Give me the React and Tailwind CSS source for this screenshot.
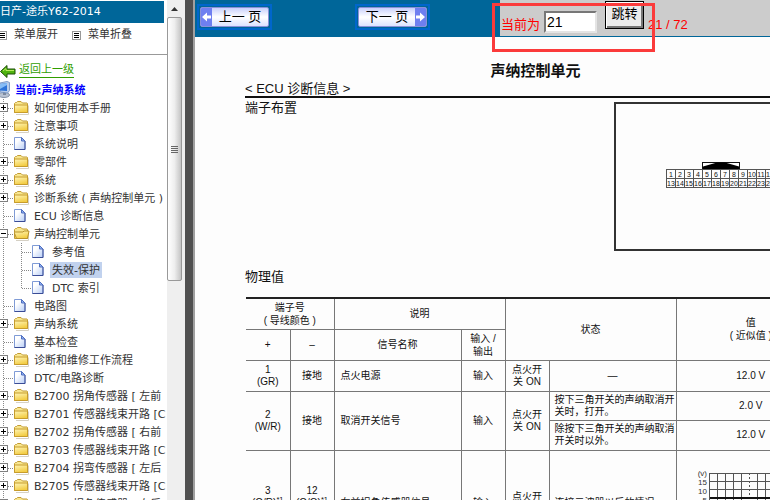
import { useState } from 'react';

// ============================================================
// DATA
// ============================================================

const TREE = [
  { type: 'folder', label: '如何使用本手册' },
  { type: 'folder', label: '注意事项' },
  { type: 'page', label: '系统说明' },
  { type: 'folder', label: '零部件' },
  { type: 'folder', label: '系统' },
  { type: 'folder', label: '诊断系统 ( 声纳控制单元 )' },
  { type: 'page', label: 'ECU 诊断信息' },
  {
    type: 'folder',
    label: '声纳控制单元',
    open: true,
    children: [
      { type: 'page', label: '参考值' },
      { type: 'page', label: '失效-保护', selected: true },
      { type: 'page', label: 'DTC 索引' },
    ],
  },
  { type: 'page', label: '电路图' },
  { type: 'folder', label: '声纳系统' },
  { type: 'page', label: '基本检查' },
  { type: 'folder', label: '诊断和维修工作流程' },
  { type: 'page', label: 'DTC/电路诊断' },
  { type: 'folder', label: 'B2700 拐角传感器 [ 左前' },
  { type: 'folder', label: 'B2701 传感器线束开路 [C' },
  { type: 'folder', label: 'B2702 拐角传感器 [ 右前' },
  { type: 'folder', label: 'B2703 传感器线束开路 [C' },
  { type: 'folder', label: 'B2704 拐弯传感器 [ 左后' },
  { type: 'folder', label: 'B2705 传感器线束开路 [C' },
  { type: 'folder', label: 'B2706 拐角传感器 [ 右后' },
];

const PINS = [
  ['1', '2', '3', '4', '5', '6', '7', '8', '9', '10', '11', '12'],
  ['13', '14', '15', '16', '17', '18', '19', '20', '21', '22', '23', '24'],
];

// ============================================================
// ICONS
// ============================================================

const IconFolder = ({ open }) => (
  <svg className="w-[18px] h-[18px] shrink-0" viewBox="0 0 18 18">
    <defs>
      <linearGradient id="folderFill" x1="0" y1="0" x2="0.4" y2="1">
        <stop offset="0" stopColor="#fff6b8" />
        <stop offset="1" stopColor="#f3cd45" />
      </linearGradient>
    </defs>
    <path d="M2 15.500h12.500v-9" fill="none" stroke="#d5d0c4" />
    <path d="M0.500 13.500v-9l1-1h1l1-1h3.500l1.500 1.500h4.500l.5.5v9z" fill="#f8e68e" stroke="#c29b33" />
    {open ? (
      <path d="M2.500 13.500l-2.500-6.500h9l1-1h5l-1.500 7.500z" fill="url(#folderFill)" stroke="#b9922b" />
    ) : (
      <path d="M0.500 13.500v-7.500h13v7.500z" fill="url(#folderFill)" stroke="#c79c2c" />
    )}
  </svg>
);

const IconPage = () => (
  <svg className="w-[18px] h-[18px] shrink-0" viewBox="0 0 18 18">
    <defs>
      <linearGradient id="pageFill" x1="0" y1="0" x2="1" y2="1">
        <stop offset="0.3" stopColor="#ffffff" />
        <stop offset="1" stopColor="#b7cdf6" />
      </linearGradient>
    </defs>
    <path d="M0.500 2.500h7l3.500 3.500v8.500h-10.500z" fill="url(#pageFill)" stroke="#7f9bd6" />
    <path d="M11 6v8.500h-10.500" fill="none" stroke="#3a4c96" />
    <path d="M7.500 2.500v3.500h3.500z" fill="#8fb0f2" stroke="#4f6fc0" />
  </svg>
);

const IconList = () => (
  <svg className="w-[9px] h-[9px] shrink-0" viewBox="0 0 9 9">
    <rect x="0.5" y="0.5" width="8" height="8" fill="#fff" stroke="#999" />
    <path d="M2 2.500h5M2 4.500h5M2 6.500h5" stroke="#000" />
  </svg>
);

const IconBack = () => (
  <svg className="w-[16px] h-[14px] shrink-0" viewBox="0 0 16 14">
    <path d="M0.500 7.500l6.500-6v3.500h8v5h-8v3.500z" fill="#4fb30e" stroke="#1d4f08" />
    <path d="M3 7l3-2.500v2h8" fill="none" stroke="#b6ec5c" />
  </svg>
);

const IconComputer = () => (
  <svg className="w-[12px] h-[17px] shrink-0" viewBox="0 0 12 17">
    <ellipse cx="4" cy="14" rx="5.500" ry="2.500" fill="#b9c3d2" stroke="#8794a8" />
    <path d="M0 2l7-1.500 2.500 1v8l-2 2.500-7.500-1z" fill="#b9cdea" stroke="#7f9cc8" />
    <path d="M0 3l7-1v8l-7-.5z" fill="#2d74d8" />
    <path d="M0 3l7-1v2l-7 4z" fill="#86bdf6" />
    <path d="M3 11.500l3 .5v2h-3z" fill="#7c8aa0" />
  </svg>
);

// Dotted connector lines of one tree row, with the expand box where needed
const TreeLines = ({ box, last }) => (
  <svg className="w-[14px] h-[18px] shrink-0" viewBox="0 0 14 18">
    <path d={last ? 'M3.500 0v9' : 'M3.500 0v18'} stroke="#888" strokeDasharray="1 1" />
    <path d="M4 9.500h9" stroke="#888" strokeDasharray="1 1" />
    {box && (
      <>
        <rect x="-0.5" y="4.500" width="8" height="8" fill="#fff" stroke="#808080" />
        <path d="M1 8.500h5" stroke="#000" />
        {box === 'plus' && <path d="M3.500 6v5" stroke="#000" />}
      </>
    )}
  </svg>
);

// ============================================================
// SIDEBAR
// ============================================================

function TreeNode({ node, nested, last }) {
  const [open, setOpen] = useState(Boolean(node.open));
  const isFolder = node.type === 'folder';

  return (
    <li>
      <div className="flex items-center h-[18px]">
        {nested && (
          <svg className="w-[18px] h-[18px] shrink-0" viewBox="0 0 18 18">
            <path d="M3.500 0v18" stroke="#888" strokeDasharray="1 1" />
          </svg>
        )}
        {isFolder ? (
          <button type="button" aria-label={node.label} className="shrink-0" onClick={() => setOpen(!open)}>
            <TreeLines box={open ? 'minus' : 'plus'} last={last} />
          </button>
        ) : (
          <TreeLines last={last} />
        )}
        {isFolder ? <IconFolder open={open} /> : <IconPage />}
        <a
          href="#"
          className={`h-4 leading-[18px] whitespace-nowrap px-[2px] ${node.selected ? 'bg-[#c1d2ee]' : ''}`}
        >
          {node.label}
        </a>
      </div>
      {open && node.children && (
        <ul>
          {node.children.map((child, i) => (
            <TreeNode key={child.label} node={child} nested last={i === node.children.length - 1} />
          ))}
        </ul>
      )}
    </li>
  );
}

function Sidebar() {
  return (
    <nav className="w-[167px] shrink-0 overflow-hidden bg-white pt-px text-[11px] text-[#333] font-['DejaVu_Sans','Noto_Sans_CJK_SC',sans-serif]">
      <h1 className="mr-[3px] h-[22px] leading-[22px] bg-[#006699] text-white whitespace-nowrap">日产-途乐Y62-2014</h1>
      <div className="flex items-center h-[25px] gap-[14px] -ml-[2px]">
        <button type="button" className="flex items-center gap-[7px]">
          <IconList />
          菜单展开
        </button>
        <button type="button" className="flex items-center gap-[7px]">
          <IconList />
          菜单折叠
        </button>
      </div>
      <hr className="mt-[6px] border-[#999]" />
      <a href="#" className="flex items-center gap-[3px] h-[19px] mt-[6px] text-[#2f9e00]">
        <IconBack />
        <span className="leading-[14px] border-b border-[#2f9e00]">返回上一级</span>
      </a>
      <div className="flex items-center gap-[3px] h-[19px] font-bold text-[#0000ff]">
        <IconComputer />
        <span className="pt-[2px] leading-4">当前:声纳系统</span>
      </div>
      <ul>
        {TREE.map((node) => (
          <TreeNode key={node.label} node={node} />
        ))}
      </ul>
    </nav>
  );
}

const Scrollbar = () => (
  <div className="flex flex-col w-[18px] shrink-0 bg-[#efefef] pr-[3px]">
    <button type="button" aria-label="向上滚动" className="flex items-center justify-center h-[17px]">
      <svg className="w-[7px] h-1" viewBox="0 0 7 4">
        <path d="M0 4l3.500-4 3.500 4z" fill="#333" />
      </svg>
    </button>
    <div className="flex flex-col items-center justify-center gap-px h-[264px] border border-[#999] rounded-[2px] bg-linear-to-r from-white via-[#eeeeee] to-[#c4c4c4]">
      <span className="w-[7px] h-px bg-[#666]" />
      <span className="w-[7px] h-px bg-[#666]" />
      <span className="w-[7px] h-px bg-[#666]" />
      <span className="w-[7px] h-px bg-[#666]" />
    </div>
  </div>
);

// ============================================================
// TOOLBAR
// ============================================================

const ArrowBlock = ({ next }) => (
  <svg className="w-[11px] h-[18px] shrink-0" viewBox="0 0 11 18">
    <rect width="11" height="18" fill="#6f7ff0" />
    {next ? (
      <path d="M1 7.500h4v-3l5 4.500-5 4.500v-3h-4z" fill="#fff" />
    ) : (
      <path d="M10 7.500h-4v-3l-5 4.500 5 4.500v-3h4z" fill="#fff" />
    )}
  </svg>
);

const PageButton = ({ next, children }) => (
  <button type="button" className="shrink-0 border-2 border-[#0066cc] p-px">
    <span className="flex items-center h-5 border border-[#8a90d8] rounded-[2px] overflow-hidden bg-linear-to-b from-[#c9d0fb] via-white to-[#dde2ff] text-[13px] text-black whitespace-nowrap">
      {!next && <ArrowBlock />}
      <span className="w-14 text-center">{children}</span>
      {next && <ArrowBlock next />}
    </span>
  </button>
);

function Toolbar() {
  const [page, setPage] = useState('21');

  return (
    <header className="flex h-[37px] bg-[#006699] pl-[2px]">
      <div className="flex items-center gap-[83px] h-[34px] shrink-0">
        <PageButton>上一 页</PageButton>
        <PageButton next>下一 页</PageButton>
      </div>
      <form
        className="relative flex flex-1 ml-[70px] h-9 bg-[#cccccc] pl-px text-[13px] text-[#ff0000] whitespace-nowrap"
        onSubmit={(e) => e.preventDefault()}
      >
        <label htmlFor="page" className="pt-[17px] leading-4">当前为</label>
        <input
          id="page"
          type="text"
          value={page}
          onChange={(e) => setPage(e.target.value)}
          className="mt-[11px] ml-1 w-[53px] h-[22px] px-px bg-white border-2 border-t-[#777] border-l-[#777] border-r-[#e4e4e4] border-b-[#e4e4e4] text-sm text-black"
        />
        <button
          type="submit"
          className="mt-px ml-2 w-[39px] h-7 border border-black bg-[#ececec] shadow-[inset_1px_1px_0_#fff,inset_-2px_-2px_0_#777] pb-[2px] text-[13px] leading-4 text-black"
        >
          跳转
        </button>
        <span className="pt-[17px] ml-1 leading-4">21 / 72</span>
        {/* Highlight frame around the jump box */}
        <div className="absolute -left-2 top-[3px] w-[163px] h-[49px] border-3 border-[#fb3b3b] pointer-events-none" />
      </form>
    </header>
  );
}

// ============================================================
// DOCUMENT
// ============================================================

const Connector = () => (
  <svg className="w-[109px] h-[26px]" viewBox="0 0 109 26" fontSize="7" textAnchor="middle" fill="#111">
    <rect x="36.500" y="0.5" width="37" height="7" fill="#fff" stroke="#111" />
    <path d="M37 7v-2.500l14-4h8l14 4v2.500z" fill="#000" />
    {PINS.map((row, r) =>
      row.map((pin, c) => (
        <g key={pin}>
          <rect x={c * 9 + 0.5} y={r * 9 + 7.5} width="9" height="9" fill="none" stroke="#555" />
          <text x={c * 9 + 5} y={r * 9 + 15}>{pin}</text>
        </g>
      ))
    )}
  </svg>
);

const Waveform = () => (
  <svg className="w-[104px] h-[70px] ml-[19px]" viewBox="0 0 104 70" fontSize="8" textAnchor="end" fill="#333">
    <text x="11" y="8">(v)</text>
    <text x="11" y="17">15</text>
    <text x="11" y="26">10</text>
    <text x="11" y="35">5</text>
    <text x="11" y="44">0</text>
    {[0, 1, 2, 3, 4, 5, 6].map((i) => (
      <path key={i} d={`M13 ${i * 8 + 5.5}h82`} stroke="#555" />
    ))}
    {[0, 1, 2, 3, 4, 5, 6, 7, 8, 9, 10].map((i) => (
      <path
        key={i}
        d={`M${i * 8 + 13.5} 5v49`}
        stroke="#555"
        strokeDasharray={i === 5 ? '2 2' : undefined}
      />
    ))}
    <path d="M14 30h80" stroke="#111" strokeWidth="2" />
  </svg>
);

function TerminalTable() {
  return (
    <table className="w-[580px] ml-px table-fixed border-collapse text-[10px] leading-3 text-center [&_th]:font-normal [&_th]:p-0 [&_td]:p-0 [&_th]:border [&_td]:border [&_th]:border-[#777] [&_td]:border-[#777] [&_th]:leading-[13px] [&_tr>*:first-child]:border-l-0 [&_sup]:leading-none">
      <colgroup>
        <col className="w-11" />
        <col className="w-11" />
        <col className="w-[127px]" />
        <col className="w-11" />
        <col className="w-11" />
        <col className="w-[127px]" />
        <col />
      </colgroup>
      <thead className="border-t-2 border-[#222]">
        <tr className="h-[31px]">
          <th colSpan="2">端子号<br />( 导线颜色 )</th>
          <th colSpan="2">说明</th>
          <th colSpan="2" rowSpan="2">状态</th>
          <th rowSpan="2">值<br />( 近似值 )</th>
        </tr>
        <tr className="h-[31px]">
          <th>+</th>
          <th>–</th>
          <th>信号名称</th>
          <th>输入 /<br />输出</th>
        </tr>
      </thead>
      <tbody>
        <tr className="h-[31px]">
          <td>1<br />(GR)</td>
          <td>接地</td>
          <td><p className="pl-[6px] text-left">点火电源</p></td>
          <td>输入</td>
          <td>点火开<br />关 ON</td>
          <td>—</td>
          <td>12.0 V</td>
        </tr>
        <tr className="h-[29px]">
          <td rowSpan="2">2<br />(W/R)</td>
          <td rowSpan="2">接地</td>
          <td rowSpan="2"><p className="pl-[6px] text-left">取消开关信号</p></td>
          <td rowSpan="2">输入</td>
          <td rowSpan="2">点火开<br />关 ON</td>
          <td><p className="pl-[5px] text-left whitespace-nowrap">按下三角开关的声纳取消开<br />关时，打开。</p></td>
          <td>2.0 V</td>
        </tr>
        <tr className="h-[30px]">
          <td className="!border-l"><p className="pl-[5px] text-left whitespace-nowrap">除按下三角开关的声纳取消<br />开关时以外。</p></td>
          <td>12.0 V</td>
        </tr>
        <tr className="h-[106px]">
          <td>3<br />(G/R)<sup>*1</sup><br />(L)<sup>*2</sup></td>
          <td>12<br />(G/O)<sup>*1</sup><br />(R)<sup>*2</sup></td>
          <td><p className="pl-[6px] text-left">右前拐角传感器信号</p></td>
          <td>输入</td>
          <td>点火开<br />关 ON</td>
          <td><p className="pl-[5px] text-left">连接示波器以后的情况</p></td>
          <td><Waveform /></td>
        </tr>
      </tbody>
    </table>
  );
}

function ManualPage() {
  return (
    <article className="w-[581px] ml-[50px] pt-6 text-[13px] text-[#111]">
      <h2 className="text-[15px] leading-5 font-bold text-center">声纳控制单元</h2>
      <h3 className="leading-[15px] border-b-2 border-[#111]">&lt; ECU 诊断信息 &gt;</h3>
      <section>
        <div className="flex justify-between">
          <h4 className="pt-[2px] leading-4">端子布置</h4>
          <div className="flex justify-center mt-1 pt-[58px] w-[212px] h-[149px] border-2 border-[#333]">
            <Connector />
          </div>
        </div>
      </section>
      <section className="pt-4">
        <h4 className="mb-[10px] leading-5">物理值</h4>
        <TerminalTable />
      </section>
    </article>
  );
}

// ============================================================
// APP
// ============================================================

export default function App() {
  return (
    <div className="flex h-screen overflow-hidden bg-[#fdfdfd] font-['Liberation_Sans','Noto_Sans_CJK_SC',sans-serif]">
      <Sidebar />
      <Scrollbar />
      <div className="w-[10px] shrink-0 bg-[#505050] border-r-2 border-[#a0a0a0]" />
      <main className="flex-1 min-w-0 overflow-hidden">
        <Toolbar />
        <ManualPage />
      </main>
    </div>
  );
}
